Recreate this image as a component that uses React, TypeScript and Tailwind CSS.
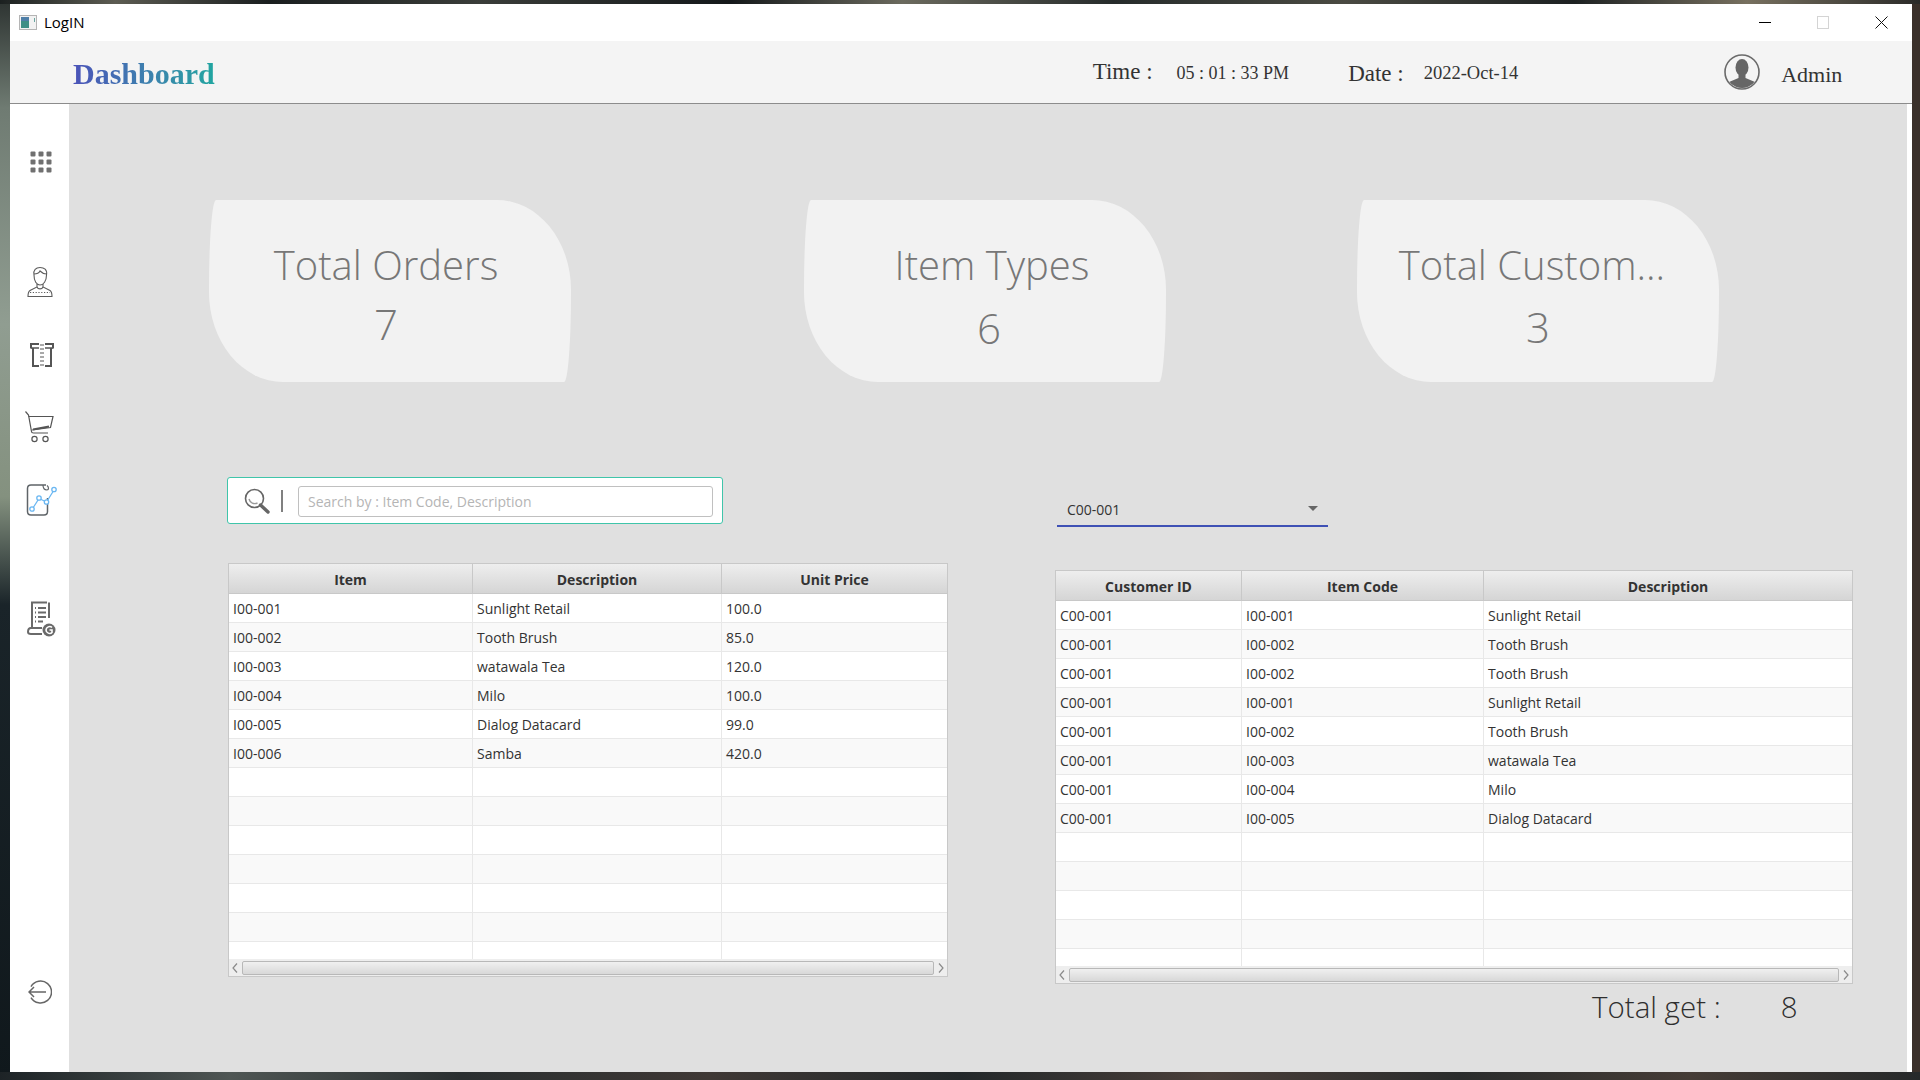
const items = [
  ["I00-001", "Sunlight Retail", "100.0"],
  ["I00-002", "Tooth Brush", "85.0"],
  ["I00-003", "watawala Tea", "120.0"],
  ["I00-004", "Milo", "100.0"],
  ["I00-005", "Dialog Datacard", "99.0"],
  ["I00-006", "Samba", "420.0"],
];

const orders = [
  ["C00-001", "I00-001", "Sunlight Retail"],
  ["C00-001", "I00-002", "Tooth Brush"],
  ["C00-001", "I00-002", "Tooth Brush"],
  ["C00-001", "I00-001", "Sunlight Retail"],
  ["C00-001", "I00-002", "Tooth Brush"],
  ["C00-001", "I00-003", "watawala Tea"],
  ["C00-001", "I00-004", "Milo"],
  ["C00-001", "I00-005", "Dialog Datacard"],
];

const Chevron = ({ left }: { left?: boolean }) => (
  <svg width="6" height="10" viewBox="0 0 6 10" fill="none" stroke="#8a8a8a" strokeWidth="1.2">
    <path d={left ? "M5 0.5 L1 5 L5 9.5" : "M1 0.5 L5 5 L1 9.5"} />
  </svg>
);

type TableProps = {
  cols: string;
  head: string[];
  rows: string[][];
  emptyRows: number;
  width: string;
};

const Table = ({ cols, head, rows, emptyRows, width }: TableProps) => {
  const filled = [...rows, ...Array.from({ length: emptyRows }, () => ["", "", ""])];
  return (
    <div className={`${width} h-[414px] flex flex-col border border-[#c8c8c8] bg-white text-[14px] text-[#333333]`}>
      <div className={`grid ${cols} h-[30px] shrink-0 border-b border-[#c8c8c8] bg-linear-to-b from-[#eeeeee] to-[#d5d5d5] font-bold`}>
        {head.map((h, i) => (
          <div key={h} className={`flex items-center justify-center pt-[1px] ${i < 2 ? "border-r border-[#c8c8c8]" : ""}`}>
            {h}
          </div>
        ))}
      </div>
      <div className="flex-1 overflow-hidden">
        {filled.map((row, r) => (
          <div
            key={r}
            className={`grid ${cols} h-[29px] border-b border-[#e8e8e8] ${r % 2 === 0 ? "bg-white" : "bg-[#f9f9f9]"}`}
          >
            {row.map((cell, c) => (
              <div key={c} className={`flex items-center pl-[4px] ${c < 2 ? "border-r border-[#e8e8e8]" : ""}`}>
                {cell}
              </div>
            ))}
          </div>
        ))}
      </div>
      <div className="h-[17px] shrink-0 flex items-center justify-between bg-[#eeeeee] px-[3px] gap-[4px]">
        <Chevron left />
        <div className="flex-1 h-[14px] rounded-[2px] border border-[#b8b8b8] bg-linear-to-b from-[#f0f0f0] to-[#d8d8d8]" />
        <Chevron />
      </div>
    </div>
  );
};

type StatCardProps = {
  title: string;
  value: string;
  margin: string;
  titleClass: string;
  valueClass: string;
};

const StatCard = ({ title, value, margin, titleClass, valueClass }: StatCardProps) => (
  <div
    className={`${margin} w-[362px] h-[182px] shrink-0 flex flex-col items-center bg-[#f2f2f2] text-[#777777] rounded-[7px_74px_7px_74px/90px] font-['Open_Sans',sans-serif] font-light`}
  >
    <div className={`mt-[37px] text-[40px] leading-[56px] whitespace-nowrap ${titleClass}`}>{title}</div>
    <div className={`text-[42px] leading-[56px] ${valueClass}`}>{value}</div>
  </div>
);

const GridIcon = () => (
  <svg width="22" height="22" viewBox="0 0 22 22" fill="#707070">
    {[0.5, 8.5, 16.5].map((y) =>
      [0.5, 8.5, 16.5].map((x) => <rect key={`${x}-${y}`} x={x} y={y} width="5" height="5" rx="1" />)
    )}
  </svg>
);

const PersonIcon = () => (
  <svg width="26" height="32" viewBox="0 0 26 32" fill="none" stroke="#5c5c5c" strokeWidth="1.1">
    <path d="M7 9 C6 4 9 1.5 13 1.5 C17 1.5 20.5 3.5 19.5 9 C19.5 15 16.5 19 13 19 C9.5 19 7 15 7 9 Z" />
    <path d="M7 8 C10 8 12 7 13 5 C15 7 17 8 19.5 8" />
    <path d="M10 18 L10 21 L3 24.5 C1.5 25.5 1 27 1 30.5 L25 30.5 C25 27 24.5 25.5 23 24.5 L16 21 L16 18" />
    <path d="M3 26.5 H23" strokeDasharray="1.2 1.6" />
    <path d="M10 21 C11 23.5 15 23.5 16 21" />
  </svg>
);

const BoxIcon = () => (
  <svg width="24" height="24" viewBox="0 0 24 24" fill="none" stroke="#555555" strokeWidth="2">
    <path d="M1 5.5 V1 H9 M15 1 H23 V5.5" />
    <path d="M3 5 V23 H9" />
    <path d="M21 5 V23 H15" />
    <path d="M1 5 H9 M15 5 H23" strokeWidth="1.4" />
    <path d="M11 1 V23 M13 1 V23" strokeWidth="1" strokeDasharray="2 2" />
  </svg>
);

const CartIcon = () => (
  <svg width="29" height="32" viewBox="0 0 29 32" fill="none" stroke="#555555" strokeWidth="1.2">
    <path d="M0.5 0.5 L3.5 4 L6.5 20.5 C6.5 21.5 7.5 22 8.5 22 H23" />
    <path d="M3.5 5.5 H28 L25.5 16.5 L7 19" />
    <path d="M8 18.5 L24 15.5" strokeWidth="1.8" />
    <circle cx="9.5" cy="28" r="2.6" />
    <circle cx="20.5" cy="28" r="2.6" />
  </svg>
);

const ChartIcon = () => (
  <svg width="32" height="32" viewBox="0 0 32 32" fill="none">
    <path
      d="M20 1 H5 C3 1 1.5 2.5 1.5 4.5 V27.5 C1.5 29.5 3 31 5 31 H18 C20 31 21.5 29.5 21.5 27.5 V14"
      stroke="#5f6468"
      strokeWidth="1.5"
    />
    <path d="M17 1 C17 4 18 6 21 6 C23 6 23 3 21 1.5" stroke="#5f6468" strokeWidth="1.2" />
    <path d="M6 25.5 L13 14.5 L20.5 18 L28 6" stroke="#6ab7f2" strokeWidth="1.3" />
    <g stroke="#6ab7f2" strokeWidth="1.3" fill="#ffffff">
      <circle cx="6" cy="25" r="2.2" />
      <circle cx="13" cy="14" r="2.2" />
      <circle cx="20.5" cy="18" r="2.2" />
      <circle cx="28" cy="5.5" r="2.2" />
    </g>
  </svg>
);

const DocIcon = () => (
  <svg width="29" height="36" viewBox="0 0 29 36" fill="none" stroke="#6a6a6a">
    <path d="M20 1.5 H5 V27" strokeWidth="2" />
    <path d="M22 1.5 V17" strokeWidth="2" />
    <path d="M1 31 C1 28 2 27 4 27 H15 M1 31 C1 32.5 2 33 4 33 H15" strokeWidth="2" />
    <path d="M8 7 H9 M8 11.5 H9 M8 16 H9 M8 20.5 H9" strokeWidth="1.8" />
    <path d="M11 7 H19 M11 11.5 H19 M11 16 H19 M11 20.5 H16" strokeWidth="1.8" />
    <circle cx="22" cy="29" r="6.5" fill="#6a6a6a" stroke="none" />
    <path d="M25 26.5 C23 24.5 19 26 19 29 C19 32 23 33.5 25 31.5 V29 H22.5" stroke="#ffffff" strokeWidth="1.6" />
  </svg>
);

const LogoutIcon = () => (
  <svg width="24" height="24" viewBox="0 0 24 24" fill="none" stroke="#666666" strokeWidth="1.5">
    <path d="M3 6.5 A11 11 0 1 1 3 17.5" />
    <path d="M18 12 H1 M6 7 L1 12 L6 17" />
  </svg>
);

const AvatarIcon = () => (
  <svg width="36" height="36" viewBox="0 0 36 36">
    <circle cx="18" cy="18" r="17" fill="none" stroke="#6a6a6a" strokeWidth="1.6" />
    <clipPath id="avatar-clip">
      <circle cx="18" cy="18" r="16" />
    </clipPath>
    <g fill="#666666" clipPath="url(#avatar-clip)">
      <ellipse cx="18" cy="13.5" rx="6.5" ry="8.5" />
      <path d="M14.5 19 H21.5 V24 L31 28 V36 H5 V28 L14.5 24 Z" />
    </g>
  </svg>
);

const SearchIcon = () => (
  <svg width="26" height="26" viewBox="0 0 26 26" fill="none">
    <circle cx="10.5" cy="10.5" r="9" stroke="#666666" strokeWidth="1.6" />
    <path d="M16.5 17 L24 24" stroke="#666666" strokeWidth="3.4" strokeLinecap="round" />
    <path d="M5 11 C6 15 10 16.5 13.5 15" stroke="#9a9a9a" strokeWidth="1.4" />
  </svg>
);

const AppIcon = () => (
  <svg width="18" height="15" viewBox="0 0 18 15">
    <rect x="0.5" y="0.5" width="17" height="14" fill="#f2f2f2" stroke="#b5b5b5" />
    <rect x="2" y="2" width="8" height="11" fill="#3f8f86" />
    <rect x="2" y="2" width="8" height="4" fill="#4f7fa8" />
    <rect x="15" y="3" width="1" height="4" fill="#6aa6a0" />
  </svg>
);

export default function App() {
  return (
    <div className="w-[1920px] h-[1080px] overflow-hidden flex flex-col bg-[linear-gradient(180deg,#2d3331_0%,#6f7b72_10%,#909d91_30%,#84917f_46%,#1a2429_56%,#10181c_100%)]">
      <div className="h-[4px] shrink-0 bg-[linear-gradient(90deg,#1b2020_0%,#5c5c52_6%,#1a1e1f_14%,#3a3d39_25%,#14181a_38%,#6b6a5e_47%,#262b2b_58%,#4a4a42_70%,#1d2122_82%,#77705f_91%,#2a2a28_100%)]" />
      <div className="flex h-[1068px] shrink-0 pl-[10px]">
        <div className="w-[1902px] flex flex-col bg-white">
          {/* title bar */}
          <div className="h-[37px] shrink-0 flex items-center bg-white pl-[9px] font-['Open_Sans',sans-serif] text-[15px] text-black">
            <AppIcon />
            <span className="ml-[7px]">LogIN</span>
            <div className="ml-auto flex items-center mr-[24px]">
              <div className="w-[12px] h-[1px] bg-black" />
              <div className="ml-[46px] w-[12px] h-[13px] border border-[#d4d4d4]" />
              <svg className="ml-[46px]" width="13" height="13" viewBox="0 0 13 13" stroke="#111111" strokeWidth="1" fill="none">
                <path d="M0.5 0.5 L12.5 12.5 M12.5 0.5 L0.5 12.5" />
              </svg>
            </div>
          </div>
          {/* header */}
          <div className="h-[63px] shrink-0 flex items-center pt-[4px] bg-[#f4f4f4] border-b border-[#8c8c8c] font-['Liberation_Serif',serif] text-[#333333]">
            <div className="ml-[63px] text-[30px] font-bold leading-none bg-linear-to-r from-[#4a52b8] to-[#1fa5a0] bg-clip-text text-transparent">
              Dashboard
            </div>
            <div className="ml-[878px] text-[23px] mb-[4px]">Time :</div>
            <div className="ml-[24px] text-[18px] mb-[2px] whitespace-nowrap">05 : 01 : 33 PM</div>
            <div className="ml-[59px] text-[23px]">Date :</div>
            <div className="ml-[20px] text-[18.5px] mb-[1px]">2022-Oct-14</div>
            <div className="ml-[206px] mb-[4px]">
              <AvatarIcon />
            </div>
            <div className="ml-[21px] text-[22px] mt-[1px]">Admin</div>
          </div>
          <div className="flex-1 flex min-h-0">
            {/* sidebar */}
            <div className="w-[59px] shrink-0 flex flex-col bg-white pl-[15px]">
              <div className="mt-[47px] ml-[5px]"><GridIcon /></div>
              <div className="mt-[93px] ml-[2px]"><PersonIcon /></div>
              <div className="mt-[45px] ml-[5px]"><BoxIcon /></div>
              <div className="mt-[44px]"><CartIcon /></div>
              <div className="mt-[41px] ml-[1px]"><ChartIcon /></div>
              <div className="mt-[85px] ml-[2px]"><DocIcon /></div>
              <div className="mt-[343px] ml-[3px]"><LogoutIcon /></div>
            </div>
            {/* content */}
            <div className="w-[1838px] shrink-0 bg-[#e0e0e0] flex flex-col font-['Open_Sans',sans-serif]">
              <div className="flex mt-[96px]">
                <StatCard margin="ml-[140px]" title="Total Orders" value="7" titleClass="mr-[8px]" valueClass="mt-[3px] mr-[8px]" />
                <StatCard margin="ml-[233px]" title="Item Types" value="6" titleClass="ml-[14px]" valueClass="mt-[7px] ml-[8px]" />
                <StatCard margin="ml-[191px]" title="Total Custom..." value="3" titleClass="mr-[12px]" valueClass="mt-[6px]" />
              </div>
              <div className="flex mt-[95px] ml-[158px]">
                <div className="w-[721px] shrink-0 flex flex-col">
                  <div className="w-[496px] h-[47px] flex items-center rounded-[3px] border border-[#3fc5aa] bg-white pl-[16px]">
                    <SearchIcon />
                    <div className="ml-[11px] w-[2px] h-[22px] bg-[#808080]" />
                    <div className="ml-[15px] w-[415px] h-[31px] mt-[1px] flex items-center rounded-[3px] border border-[#c0c0c0] bg-white pl-[9px] text-[14px] text-[#b5b5b5]">
                      Search by : Item Code, Description
                    </div>
                  </div>
                  <div className="mt-[39px] ml-[1px]">
                    <Table
                      width="w-[720px]"
                      cols="grid-cols-[244px_249px_1fr]"
                      head={["Item", "Description", "Unit Price"]}
                      rows={items}
                      emptyRows={7}
                    />
                  </div>
                </div>
                <div className="ml-[107px] w-[798px] shrink-0 flex flex-col">
                  <div className="mt-[14px] ml-[2px] w-[271px] h-[36px] flex items-center justify-between border-b-2 border-[#3f51b5] pl-[10px] pr-[10px] pt-[1px] text-[14px] text-[#333333]">
                    <span className="pt-[1px]">C00-001</span>
                    <div className="w-0 h-0 border-x-[5px] border-x-transparent border-t-[5px] border-t-[#666666]" />
                  </div>
                  <div className="mt-[43px]">
                    <Table
                      width="w-[798px]"
                      cols="grid-cols-[186px_242px_1fr]"
                      head={["Customer ID", "Item Code", "Description"]}
                      rows={orders}
                      emptyRows={5}
                    />
                  </div>
                  <div className="flex items-center mt-[3px] text-[#2e2e2e] font-light text-[29.5px] leading-[40px]">
                    <span className="ml-[537px]">Total get :</span>
                    <span className="ml-[60px]">8</span>
                  </div>
                </div>
              </div>
            </div>
            <div className="flex-1 bg-white" />
          </div>
        </div>
        <div className="flex-1 bg-[#3a302a]" />
      </div>
      <div className="flex-1 bg-[linear-gradient(90deg,#1d2326_0%,#4f5654_12%,#2a2f30_24%,#3f3835_37%,#23282a_50%,#4a3f3a_63%,#2a2c2c_76%,#453c36_88%,#26292a_100%)]" />
    </div>
  );
}
